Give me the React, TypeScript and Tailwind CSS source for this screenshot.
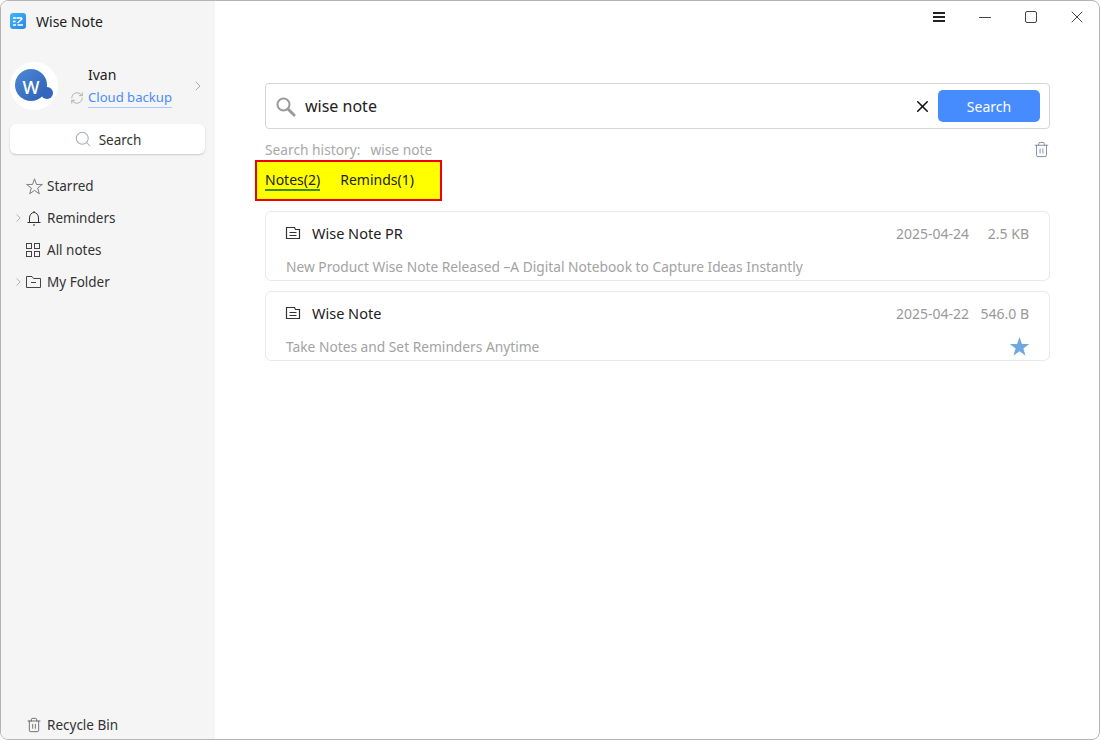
import { Search, X, ChevronRight, RefreshCw, Trash2 } from "lucide-react";

const font = "font-['Noto_Sans','Open_Sans',sans-serif]";

const NoteIcon = () => (
  <svg width="16" height="14" viewBox="0 0 16 14" fill="none" stroke="#333" strokeWidth="1.2" className="-mt-[2px] -ml-px">
    <path d="M1.5 12.5V1.5H9.5L10.5 3.5H14.5V12.5Z" />
    <path d="M4.5 6.5H11.5M4.5 9.5H11.5" />
  </svg>
);

const StarIcon = ({ filled }: { filled?: boolean }) => (
  <svg width={filled ? 21 : 17} height={filled ? 21 : 17} viewBox="0 0 20 20" fill={filled ? "#6fa8dc" : "none"} stroke={filled ? "none" : "#777"} strokeWidth="1.1" className={filled ? "-mr-px mb-[2px]" : ""}>
    <path d="M10 1L12.3 7.6H19.3L13.7 11.8L15.7 18.6L10 14.6L4.3 18.6L6.3 11.8L0.7 7.6H7.7Z" />
  </svg>
);

const NavRow = ({ icon, label, arrow }: { icon: React.ReactNode; label: string; arrow?: boolean }) => (
  <div className="flex h-8 items-center">
    <div className="flex w-[24px] justify-start pl-[11px]">
      {arrow && <ChevronRight size={16} strokeWidth={1.2} className="text-[#8a8a8a]" />}
    </div>
    <div className="flex w-[22px] justify-start pl-px">{icon}</div>
    <span className="text-[13.5px] text-[#333]">{label}</span>
  </div>
);

const NoteCard = ({ title, date, size, desc, starred }: { title: string; date: string; size: string; desc: string; starred?: boolean }) => (
  <div className="flex h-[70px] flex-col rounded-md border border-[#e9e9ef] px-5">
    <div className="mt-[11px] flex h-[22px] items-center">
      <NoteIcon />
      <span className="ml-[11px] text-[14.5px] text-[#222]">{title}</span>
      <span className="-mt-[2px] ml-auto text-[14px] text-[#999]">{date}</span>
      <span className="-mt-[2px] w-[60px] text-right text-[14px] text-[#999]">{size}</span>
    </div>
    <div className="mt-[12px] flex h-5 items-center justify-between">
      <span className="text-[13.75px] text-[#a3a3a3]">{desc}</span>
      {starred && <StarIcon filled />}
    </div>
  </div>
);

export default function App() {
  return (
    <div className={`${font} flex h-[740px] w-[1100px] overflow-hidden rounded-lg border border-[#b4b4b4] bg-white`}>
      <aside className="flex w-[214px] flex-col bg-[#f5f5f5]">
        <div className="flex h-[40px] items-center pl-[9px]">
          <div className="flex h-4 w-4 items-center justify-center rounded-[3px] bg-gradient-to-br from-[#45b4f7] to-[#2a86ea]">
            <svg width="13" height="13" viewBox="0 0 13 13" fill="none" stroke="white" strokeWidth="1.3">
              <path d="M1 3H4M1 6.5H3.5M1 10H4M4.5 3H10M5.5 10H11M5.5 8L10.5 3.5" />
            </svg>
          </div>
          <span className="ml-[10px] text-[14px] text-[#222]">Wise Note</span>
        </div>
        <div className="mt-[20px] flex h-[50px] items-center pl-[9px]">
          <div className="flex h-12 w-12 items-center justify-start rounded-full bg-white pl-[5px]">
            <div className="relative -mt-[2px] flex h-[32px] w-[32px] items-center justify-center rounded-full bg-gradient-to-br from-[#4f8ad8] to-[#2c5fb4]">
              <span className="mt-[3px] text-[18px] font-medium leading-none text-white">W</span>
              <div className="absolute bottom-[2px] right-[-6px] h-[12px] w-[12px] rounded-full bg-[#3566bd]" />
            </div>
          </div>
          <div className="ml-3 flex flex-col">
            <span className="mb-[3px] ml-[18px] text-[14px] leading-[21px] text-[#222]">Ivan</span>
            <div className="flex items-center">
              <RefreshCw size={14} strokeWidth={1.2} className="text-[#999]" />
              <span className="ml-[4px] border-b border-[#a9c8ff] text-[13.1px] leading-[19px] text-[#4a8cff]">Cloud backup</span>
            </div>
          </div>
          <ChevronRight size={16} strokeWidth={1.2} className="ml-auto mr-[9px] text-[#999]" />
        </div>
        <div className="ml-[9px] mr-[10px] mt-[13px] flex h-[30px] items-center justify-center rounded-md bg-white shadow-[0_1px_2px_rgba(0,0,0,0.18)]">
          <Search size={18} strokeWidth={1.4} className="text-[#a9b1bd]" />
          <span className="ml-[7px] mt-[2px] text-[13.5px] text-[#333]">Search</span>
        </div>
        <nav className="mt-[16px] flex flex-col">
          <NavRow label="Starred" icon={<StarIcon />} />
          <NavRow
            label="Reminders"
            arrow
            icon={
              <svg width="16" height="16" viewBox="0 0 16 16" fill="none" stroke="#333" strokeWidth="1">
                <path d="M8 1V2.5M1.5 12.5H14.5M3.5 12.5V8A4.5 5.5 0 0 1 12.5 8V12.5M7 15H9" />
              </svg>
            }
          />
          <NavRow
            label="All notes"
            icon={
              <svg width="14" height="14" viewBox="0 0 14 14" fill="none" stroke="#444" strokeWidth="1">
                <rect x="0.5" y="0.5" width="5" height="5" />
                <rect x="8.5" y="0.5" width="5" height="5" />
                <rect x="0.5" y="8.5" width="5" height="5" />
                <rect x="8.5" y="8.5" width="5" height="5" />
              </svg>
            }
          />
          <NavRow
            label="My Folder"
            arrow
            icon={
              <svg width="15" height="14" viewBox="0 0 15 14" fill="none" stroke="#444" strokeWidth="1">
                <path d="M0.5 12.5V1.5H6L7.5 3.5H14.5V12.5Z" />
                <path d="M5 7.5H10" />
              </svg>
            }
          />
        </nav>
        <div className="-mb-[2px] mt-auto">
          <NavRow label="Recycle Bin" icon={<Trash2 size={16} strokeWidth={1.1} className="text-[#444]" />} />
        </div>
      </aside>
      <main className="flex flex-1 flex-col">
        <div className="flex h-[42px] items-start justify-end">
          <div className="flex h-[32px] items-center">
            <div className="flex w-[46px] justify-center">
              <div className="flex h-[10px] w-3 flex-col justify-between">
                <div className="h-[2px] bg-[#222]" />
                <div className="h-[2px] bg-[#222]" />
                <div className="h-[2px] bg-[#222]" />
              </div>
            </div>
            <div className="flex w-[46px] justify-center">
              <div className="h-px w-3 bg-[#444]" />
            </div>
            <div className="flex w-[46px] justify-center">
              <div className="h-[12px] w-[12px] rounded-[2px] border border-[#444]" />
            </div>
            <div className="flex w-[45px] justify-start pl-[13px]">
              <X size={20} strokeWidth={1.1} className="text-[#333]" />
            </div>
          </div>
        </div>
        <div className="ml-[50px] mr-[49px] mt-[40px] flex flex-col">
          <div className="flex h-[46px] items-center rounded-[4px] border border-[#d2d6e0] pl-[9px] pr-[9px]">
            <svg width="21" height="21" viewBox="0 0 21 21" fill="none" stroke="#9b9b9b">
              <circle cx="8.5" cy="8.5" r="6" strokeWidth="2" />
              <path d="M13 13L19 19" strokeWidth="3" strokeLinecap="round" />
            </svg>
            <span className="ml-[9px] text-[16px] text-[#222]">wise note</span>
            <X size={19} strokeWidth={1.9} className="ml-auto mr-[6px] text-[#111]" />
            <button className="h-8 w-[102px] rounded-[5px] bg-[#468cff] text-[14px] text-white">Search</button>
          </div>
          <div className="mt-[10px] flex h-[21px] items-center justify-between">
            <span className="mt-[2px] text-[13.75px] text-[#a8a8a8]">
              Search history:<span className="ml-[10px]">wise note</span>
            </span>
            <Trash2 size={17} strokeWidth={1.2} className="text-[#6f7f9a]" />
          </div>
          <div className="-ml-[10px] flex h-[41px] w-[187px] items-center gap-5 border-2 border-[#ee0000] bg-[#ffff00] pl-2">
            <span className="border-b-2 border-[#3f8f00] text-[14px] leading-[18px] text-[#222]">Notes(2)</span>
            <span className="mb-[2px] text-[14px] leading-[18px] text-[#222]">Reminds(1)</span>
          </div>
          <div className="mt-[10px] flex flex-col gap-[10px]">
            <NoteCard title="Wise Note PR" date="2025-04-24" size="2.5 KB" desc="New Product Wise Note Released –A Digital Notebook to Capture Ideas Instantly" />
            <NoteCard title="Wise Note" date="2025-04-22" size="546.0 B" desc="Take Notes and Set Reminders Anytime" starred />
          </div>
        </div>
      </main>
    </div>
  );
}
